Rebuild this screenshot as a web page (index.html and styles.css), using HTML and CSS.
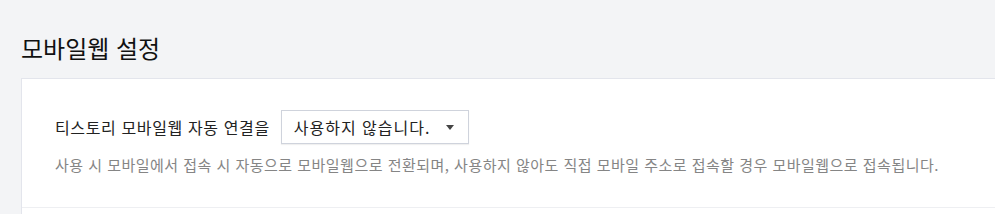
FILE: index.html
```html
<!DOCTYPE html>
<html lang="ko">
  <head>
    <meta charset="UTF-8" />
    <meta name="viewport" content="width=device-width, initial-scale=1.0" />
    <title>모바일웹 설정</title>
    <link rel="stylesheet" href="styles.css">
  </head>
  <body>
    <div class="page">
      <h2 class="title">모바일웹 설정</h2>
      <div class="card">
        <div class="section">
          <div class="row">
            <span class="label">티스토리 모바일웹 자동 연결을</span>
            <div class="select">
              <span class="select-text">사용하지 않습니다.</span>
              <span class="arrow"></span>
            </div>
          </div>
          <p class="desc">사용 시 모바일에서 접속 시 자동으로 모바일웹으로 전환되며, 사용하지 않아도 직접 모바일 주소로 접속할 경우 모바일웹으로 접속됩니다.</p>
        </div>
        <div class="section next"></div>
      </div>
    </div>
  </body>
</html>
```

FILE: styles.css
```css
body {
  margin: 0;
  background: #f3f4f6;
  font-family: "Noto Sans CJK KR", "Noto Sans", sans-serif;
  color: #222;
  overflow: hidden;
}

.page {
  padding: 31px 0 0 21px;
}

.title {
  margin: 0 0 13px;
  font-size: 24px;
  font-weight: 400;
  line-height: 34px;
  color: #111;
}

.card {
  background: #fff;
  border-top: 1px solid #e3e5ec;
  border-left: 1px solid #e3e5ec;
}

.section {
  padding: 31px 0 31px 33px;
  border-bottom: 1px solid #eeeff2;
}

.section.next {
  height: 40px;
  padding: 0;
  border: none;
}

.row {
  display: flex;
  align-items: center;
  gap: 11px;
}

.label {
  font-size: 16px;
  letter-spacing: 0.62px;
  color: #222;
}

.select {
  display: flex;
  align-items: center;
  justify-content: space-between;
  box-sizing: border-box;
  width: 188px;
  height: 34px;
  padding: 0 14px 0 12px;
  border: 1px solid #cfd3dc;
  box-shadow: 0 1px 1px rgba(0, 0, 0, 0.06);
  font-size: 16px;
  letter-spacing: 1px;
  color: #222;
}

.arrow {
  width: 0;
  height: 0;
  border-left: 4px solid transparent;
  border-right: 4px solid transparent;
  border-top: 5px solid #444;
}

.desc {
  margin: 10px 0 0;
  font-size: 15px;
  letter-spacing: 0.48px;
  line-height: 22px;
  color: #858585;
}
```
